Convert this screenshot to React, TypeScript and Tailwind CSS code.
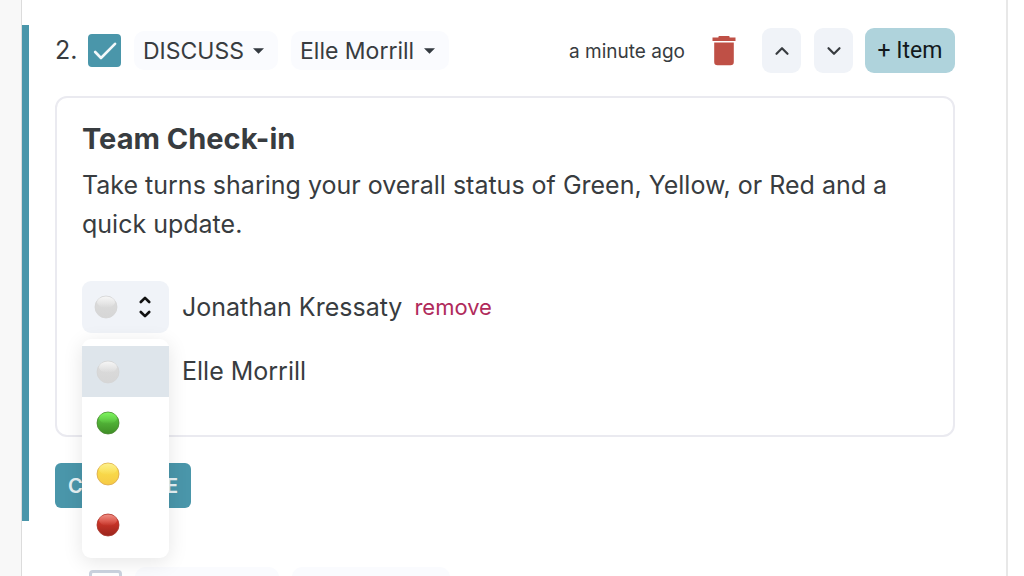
import React, { useState } from 'react';
import { ChevronDown, ChevronUp } from 'lucide-react';

type Status = 'none' | 'green' | 'yellow' | 'red';

const STATUSES: Status[] = ['none', 'green', 'yellow', 'red'];

const COLORS: Record<Status, { top: string; bottom: string; shine: string; edge: string }> = {
  none: { top: '#dadada', bottom: '#d6d6d6', shine: '#f6f6f6', edge: '#d4d4d4' },
  green: { top: '#56bd3c', bottom: '#3f8d26', shine: '#7df45f', edge: '#47852f' },
  yellow: { top: '#f9dc4a', bottom: '#f6ca45', shine: '#fdf08c', edge: '#d9a74a' },
  red: { top: '#d0372a', bottom: '#9a241c', shine: '#ee8d83', edge: '#a8362c' },
};

const StatusDot: React.FC<{ status: Status; id: string }> = ({ status, id }) => {
  const c = COLORS[status];
  return (
    <svg width="24" height="24" viewBox="0 0 24 24" aria-hidden="true">
      <defs>
        <linearGradient id={`${id}-body`} x1="0" y1="0" x2="0" y2="1">
          <stop offset="0.3" stopColor={c.top} />
          <stop offset="1" stopColor={c.bottom} />
        </linearGradient>
        <linearGradient id={`${id}-shine`} x1="0" y1="0" x2="0" y2="1">
          <stop offset="0" stopColor={c.shine} />
          <stop offset="1" stopColor={c.shine} stopOpacity="0" />
        </linearGradient>
      </defs>
      <circle cx="12" cy="12" r="11" fill={`url(#${id}-body)`} stroke={c.edge} strokeWidth="0.8" />
      <ellipse cx="12" cy="7.2" rx="9" ry="5.6" fill={`url(#${id}-shine)`} />
    </svg>
  );
};

const DropdownChip: React.FC<{ label: string; options: string[]; className: string }> = ({
  label,
  options,
  className,
}) => (
  <div className={`relative flex items-center ${className}`}>
    <select
      aria-label={label}
      className="h-[39px] w-full appearance-none rounded-[10px] bg-[#fafbfe] pt-px pr-6 pl-[9px] text-[23px] text-[#383c40] outline-none"
    >
      {options.map(o => (
        <option key={o}>{o}</option>
      ))}
    </select>
    <svg width="11" height="6" viewBox="0 0 11 6" className="pointer-events-none absolute right-[14px]">
      <path d="M0 0.2h11L5.5 5.8z" fill="#343a40" />
    </svg>
  </div>
);

const DoneCheckbox: React.FC<{ label: string; defaultChecked?: boolean }> = ({ label, defaultChecked }) => (
  <div className="relative grid place-items-center">
    <input
      type="checkbox"
      aria-label={label}
      defaultChecked={defaultChecked}
      className="peer size-[33px] appearance-none rounded-[4px] border-[3px] border-[#cbd3df] bg-white checked:border-[#4a96aa] checked:bg-[#4a96aa]"
    />
    <svg
      width="24"
      height="18"
      viewBox="0 0 24 18"
      className="pointer-events-none absolute hidden peer-checked:block"
    >
      <path d="M2.2 10l5.8 6L22 1.8" fill="none" stroke="#f4f8fa" strokeWidth="2.6" strokeLinecap="round" strokeLinejoin="round" />
    </svg>
  </div>
);

const TrashIcon: React.FC = () => (
  <svg width="24" height="30" viewBox="0 0 24 30" aria-hidden="true">
    <path
      d="M7.5 0h9a1 1 0 0 1 1 1.5H23.5v3.4H0.5V1.5H6.5A1 1 0 0 1 7.5 0zM2.2 6.5h19.6V26a3.3 3.3 0 0 1-3.3 3.3h-13A3.3 3.3 0 0 1 2.2 26z"
      fill="#bf5046"
    />
  </svg>
);

const ItemControls: React.FC<{ number: number; checked?: boolean }> = ({ number, checked }) => (
  <>
    <span className="w-[33px] pt-px text-[25px]">{number}.</span>
    <DoneCheckbox label={`Item ${number} done`} defaultChecked={checked} />
    <DropdownChip label="Item type" options={['DISCUSS', 'DECIDE', 'UPDATE']} className="ml-[13px] w-36" />
    <DropdownChip label="Item owner" options={['Elle Morrill', 'Jon Kressaty']} className="ml-[13px] w-[158px]" />
  </>
);

const ItemHeader: React.FC<{ number: number; checked?: boolean; time: string }> = ({ number, checked, time }) => (
  <div className="flex items-center text-[#383c40]">
    <ItemControls number={number} checked={checked} />
    <span className="ml-auto pt-[3px] text-[19px]">{time}</span>
    <button aria-label="Delete item" className="ml-[27px]">
      <TrashIcon />
    </button>
    <button
      aria-label="Move up"
      className="ml-[26px] grid h-[45px] w-[39px] place-items-center rounded-[9px] bg-[#f0f3f8]"
    >
      <ChevronUp size={22} strokeWidth={2.4} />
    </button>
    <button
      aria-label="Move down"
      className="ml-[13px] grid h-[45px] w-[39px] place-items-center rounded-[9px] bg-[#f0f3f8]"
    >
      <ChevronDown size={22} strokeWidth={2.4} />
    </button>
    <button className="ml-3 h-[45px] w-[90px] rounded-[9px] bg-[#afd3dc] pt-px font-[Roboto,sans-serif] text-[23px] text-[#12191c]">
      + Item
    </button>
  </div>
);

const StatusPicker: React.FC<{ name: string }> = ({ name }) => {
  const [status, setStatus] = useState<Status>('none');
  const [open, setOpen] = useState(true);

  return (
    <div className="relative">
      <button
        aria-label={`Status of ${name}`}
        aria-haspopup="listbox"
        aria-expanded={open}
        onClick={() => setOpen(!open)}
        className="flex h-[52px] w-[87px] items-center justify-between rounded-[9px] bg-[#f0f3f8] pr-[18px] pl-3"
      >
        <StatusDot status={status} id="current" />
        <svg width="12" height="22" viewBox="0 0 12 22" aria-hidden="true">
          <path d="M1.8 6L6 1.8L10.2 6M1.8 16L6 20.2L10.2 16" fill="none" stroke="#111" strokeWidth="2.6" strokeLinecap="round" strokeLinejoin="round" />
        </svg>
      </button>
      {open && (
        <ul
          role="listbox"
          aria-label={`Status of ${name}`}
          className="absolute top-full left-0 z-10 mt-[6px] w-[87px] rounded-[9px] bg-white pt-[7px] pb-2 shadow-[0_4px_20px_rgba(0,0,0,0.1)]"
        >
          {STATUSES.map(s => (
            <li key={s} role="option" aria-selected={s === status}>
              <button
                aria-label={s}
                onClick={() => {
                  setStatus(s);
                  setOpen(false);
                }}
                className={`flex h-[51px] w-full items-center pl-[14px] ${s === status ? 'bg-[#dee5eb]' : 'bg-white'}`}
              >
                <StatusDot status={s} id={`option-${s}`} />
              </button>
            </li>
          ))}
        </ul>
      )}
    </div>
  );
};

const App: React.FC = () => {
  const [members, setMembers] = useState(['Jonathan Kressaty', 'Elle Morrill']);

  return (
    <div className="flex h-screen overflow-hidden bg-white font-[Inter,'Liberation_Sans',sans-serif] text-[#383c40]">
      <div className="w-[22px] shrink-0 border-r border-[#dcdcdc] bg-[#f8f8f8]" />

      <main className="mr-4 flex-1 border-r-2 border-[#e8e8e8] pt-[25px]">
        {/* Active agenda item */}
        <section className="border-l-[7px] border-[#4a96aa] pt-[3px] pr-[51px] pb-[13px] pl-[26px]">
          <ItemHeader number={2} checked time="a minute ago" />

          <div className="mt-[23px] rounded-[12px] border-2 border-[#eaeaf0] px-[25px] pt-[21px] pb-[38px]">
            <h2 className="text-[29px] leading-[39px] font-bold">Team Check-in</h2>
            <p className="mt-[8px] text-[25px] leading-[39px]">
              Take turns sharing your overall status of Green, Yellow, or Red and a quick update.
            </p>

            <div className="mt-[37px] flex flex-col gap-3 text-[25px]">
              {members.map((name, i) => (
                <div key={name} className="flex h-[52px] items-center">
                  {i === 0 ? <StatusPicker name={name} /> : <div className="w-[87px]" />}
                  <span className="ml-[13px] pt-[2px]">{name}</span>
                  {i === 0 && (
                    <button
                      onClick={() => setMembers(members.filter(m => m !== name))}
                      className="ml-3 pt-px text-[22px] text-[#b02a5b]"
                    >
                      remove
                    </button>
                  )}
                </div>
              ))}
            </div>
          </div>

          <button className="mt-[26px] h-[45px] w-[136px] rounded-[6px] bg-[#4a96aa] text-[20px] font-semibold text-[#e6f1f4]">
            COMPLETE
          </button>
        </section>

        {/* Next agenda item */}
        <section className="flex items-center pt-[46px] pr-[51px] pl-[34px]">
          <ItemControls number={3} />
        </section>
      </main>
    </div>
  );
};

export default App;
